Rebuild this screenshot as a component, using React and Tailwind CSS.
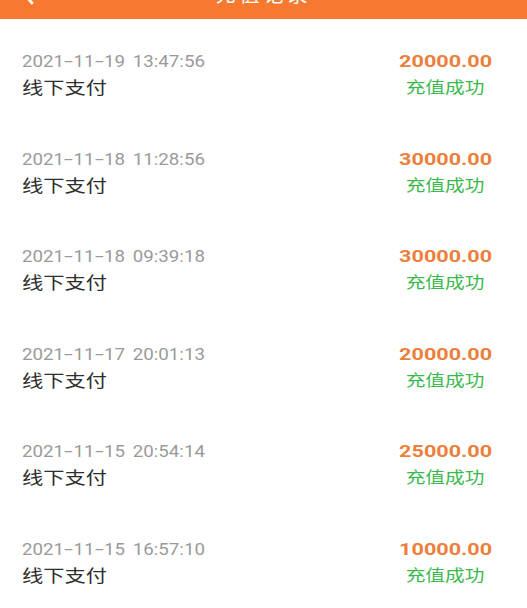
import React from "react";

const rows = [
  { time: "2021-11-19 13:47:56", amount: "20000.00" },
  { time: "2021-11-18 11:28:56", amount: "30000.00" },
  { time: "2021-11-18 09:39:18", amount: "30000.00" },
  { time: "2021-11-17 20:01:13", amount: "20000.00" },
  { time: "2021-11-15 20:54:14", amount: "25000.00" },
  { time: "2021-11-15 16:57:10", amount: "10000.00" },
];

function DateText({ value }) {
  return (
    <div className="inline-block origin-left scale-x-[1.1] text-[17px] leading-[20px] text-[#9a9a9a] whitespace-pre">
      {value.split("").map((c, i) => {
        if (c === "-")
          return (
            <span key={i} className="inline-block w-[8.6px] text-center scale-x-[1.7]">
              -
            </span>
          );
        if (c === " ")
          return (
            <span key={i} className="inline-block w-[7px]">
              {" "}
            </span>
          );
        return <span key={i}>{c}</span>;
      })}
    </div>
  );
}

export default function App() {
  return (
    <div className="w-[527px] h-[608px] overflow-hidden bg-white font-['Roboto','Noto_Sans_CJK_SC',sans-serif]">
      <div className="h-[19px] overflow-hidden bg-[#f6792f]">
        <div className="h-[48px] -mt-[30px] flex items-center justify-between pl-[21px] pr-[21px]">
          <svg width="14" height="22" viewBox="0 0 14 22" fill="none">
            <path d="M11 2 L3 11 L11 20" stroke="#fff3dc" strokeWidth="3" strokeLinecap="round" strokeLinejoin="round" />
          </svg>
          <div className="text-white text-[20px] leading-[24px] tracking-[4px] font-['Noto_Sans_CJK_SC',sans-serif]">充值记录</div>
          <div className="w-[14px]" />
        </div>
      </div>
      {rows.map((r, i) => (
        <div key={i} className="h-[97.6px] pt-[32px] pl-[22px] pr-[45px] flex justify-between items-start">
          <div className="flex flex-col items-start">
            <DateText value={r.time} />
            <div className="mt-[5px] inline-block origin-left scale-x-[1.25] text-[17px] leading-[22px] text-[#2e2e2e] font-['Noto_Sans_CJK_SC',sans-serif]">
              线下支付
            </div>
          </div>
          <div className="flex flex-col items-center">
            <div className="inline-block scale-x-[1.27] text-[17px] leading-[20px] font-bold text-[#ec7f3c]">{r.amount}</div>
            <div className="mt-[4px] inline-block scale-x-[1.23] text-[16px] leading-[22px] text-[#3cb94e] font-['Noto_Sans_CJK_SC',sans-serif]">
              充值成功
            </div>
          </div>
        </div>
      ))}
    </div>
  );
}
